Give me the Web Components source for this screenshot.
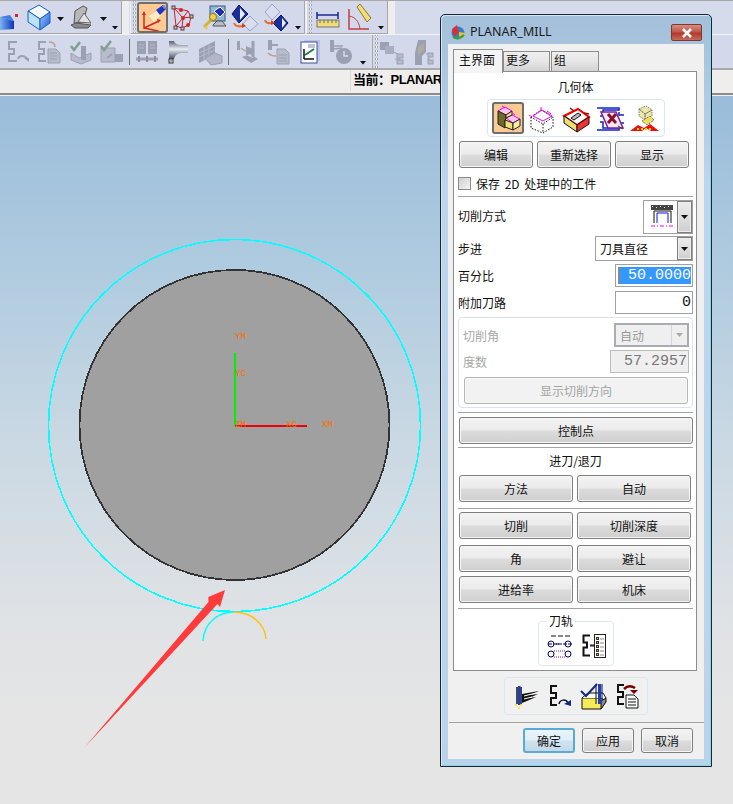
<!DOCTYPE html>
<html>
<head>
<meta charset="utf-8">
<title>PLANAR_MILL</title>
<style>
    html, body { margin: 0; height: 100%; overflow: hidden; }
    body { font: 12px "Noto Sans CJK SC", "Noto Sans", sans-serif; }
</style>
</head>
<body>
<cad-app>
    <cad-toolbar>
        <cad-group>
            <cad-icon name="cubeCut"></cad-icon>
            <cad-icon name="cube" style="margin-left:9px"></cad-icon>
            <cad-icon name="drop" style="margin-left:6px"></cad-icon>
            <cad-icon name="mould" style="margin-left:6px"></cad-icon>
            <cad-icon name="drop" style="margin-left:7px"></cad-icon>
            <cad-icon name="dropSmall" style="margin-left:5px"></cad-icon>
        </cad-group>
        <cad-group grip style="margin-left:8px">
            <cad-icon name="csys" active style="margin-left:3px"></cad-icon>
            <cad-icon name="net" style="margin-left:4px"></cad-icon>
            <cad-icon name="monitor" style="margin-left:9px"></cad-icon>
            <cad-icon name="diamondA" style="margin-left:5px"></cad-icon>
            <cad-icon name="diamondB" style="margin-left:6px"></cad-icon>
            <cad-icon name="dropSmall" style="margin-left:7px"></cad-icon>
        </cad-group>
        <cad-group grip style="margin-left:1px">
            <cad-icon name="ruler" style="margin-left:6px"></cad-icon>
            <cad-icon name="angle" style="margin-left:8px"></cad-icon>
            <cad-icon name="dropSmall" style="margin-left:7px"></cad-icon>
        </cad-group>
    </cad-toolbar>
    <cad-toolbar second>
        <cad-group plain>
            <cad-icon name="gPath" style="margin-left:7px"></cad-icon>
            <cad-icon name="gPost" style="margin-left:8px"></cad-icon>
            <cad-icon name="gCheck" style="margin-left:10px"></cad-icon>
            <cad-icon name="gCheck2" style="margin-left:8px"></cad-icon>
            <cad-icon name="vbar" style="margin-left:5px"></cad-icon>
            <cad-icon name="gBooks" style="margin-left:6px"></cad-icon>
            <cad-icon name="spindle" style="margin-left:11px"></cad-icon>
            <cad-icon name="gWall" style="margin-left:9px"></cad-icon>
            <cad-icon name="vbar" style="margin-left:6px"></cad-icon>
            <cad-icon name="gMachine" style="margin-left:7px"></cad-icon>
            <cad-icon name="gDoc" style="margin-left:7px"></cad-icon>
            <cad-icon name="report" style="margin-left:11px"></cad-icon>
            <cad-icon name="gClock" style="margin-left:9px"></cad-icon>
            <cad-icon name="dropSmall" style="margin-left:8px"></cad-icon>
        </cad-group>
        <cad-group grip second style="margin-left:4px">
            <cad-icon name="gTree" style="margin-left:4px"></cad-icon>
            <cad-icon name="gTree2" style="margin-left:7px"></cad-icon>
        </cad-group>
    </cad-toolbar>
    <cad-status>当前：PLANAR</cad-status>
    <cad-viewport></cad-viewport>

    <ug-dialog heading="PLANAR_MILL">
        <ug-tabs slot="tabs"></ug-tabs>

        <ug-label style="margin-top:6px">几何体</ug-label>
        <ug-iconbar style="margin:4px 0 0 29px;width:178px" pad="2">
            <cad-icon name="geoPart" active></cad-icon>
            <cad-icon name="geoBlank"></cad-icon>
            <cad-icon name="geoCheck"></cad-icon>
            <cad-icon name="geoTrim"></cad-icon>
            <cad-icon name="geoFloor"></cad-icon>
        </ug-iconbar>
        <ug-row cols="74px 74px 74px" style="margin:4px 0 0 1px">
            <ug-button>编辑</ug-button>
            <ug-button>重新选择</ug-button>
            <ug-button>显示</ug-button>
        </ug-row>
        <ug-check style="margin-top:9px">保存 2D 处理中的工件</ug-check>
        <ug-sep style="margin-top:6px"></ug-sep>
        <ug-field label="切削方式" width="50" height="34" style="margin-top:3px;--lift:3px"><ug-combo icon></ug-combo></ug-field>
        <ug-field label="步进" width="98" height="25" style="margin-top:2px;--lift:1px"><ug-combo>刀具直径</ug-combo></ug-field>
        <ug-field label="百分比" width="78" height="23" style="margin-top:3px"><ug-input selected>50.0000</ug-input></ug-field>
        <ug-field label="附加刀路" width="78" height="23" style="margin-top:4px"><ug-input>0</ug-input></ug-field>
        <ug-box style="margin-top:3px">
            <ug-field label="切削角" width="75" height="24" off style="margin-left:4px;margin-right:3px"><ug-combo off>自动</ug-combo></ug-field>
            <ug-field label="度数" width="79" height="23" off style="margin:3px 3px 0 4px"><ug-input off>57.2957</ug-input></ug-field>
            <ug-button off style="margin:4px 4px 0 5px;height:27px">显示切削方向</ug-button>
        </ug-box>
        <ug-sep style="margin-top:4px"></ug-sep>
        <ug-button style="margin:4px 0 0 1px;height:27px">控制点</ug-button>
        <ug-sep style="margin-top:3px"></ug-sep>
        <ug-label style="margin-top:4px">进刀/退刀</ug-label>
        <ug-row cols="114px 114px" style="margin:6px 0 0 1px">
            <ug-button>方法</ug-button>
            <ug-button>自动</ug-button>
        </ug-row>
        <ug-sep style="margin-top:6px"></ug-sep>
        <ug-row cols="114px 114px" style="margin:3px 0 0 1px">
            <ug-button>切削</ug-button>
            <ug-button>切削深度</ug-button>
        </ug-row>
        <ug-row cols="114px 114px" style="margin:6px 0 0 1px">
            <ug-button>角</ug-button>
            <ug-button>避让</ug-button>
        </ug-row>
        <ug-row cols="114px 114px" style="margin:4px 0 0 1px">
            <ug-button>进给率</ug-button>
            <ug-button>机床</ug-button>
        </ug-row>
        <ug-sep style="margin-top:5px"></ug-sep>
        <ug-iconbar legend="刀轨" style="margin:12px 0 0 80px;width:76px;height:45px;padding-top:5px" pad="10">
            <cad-icon name="axisPath"></cad-icon>
            <cad-icon name="axisList"></cad-icon>
        </ug-iconbar>

        <ug-iconbar slot="actions" style="margin:6px 0 0 51px;width:144px" pad="10">
            <cad-icon name="bFeed"></cad-icon>
            <cad-icon name="bReplay"></cad-icon>
            <cad-icon name="bVerify"></cad-icon>
            <cad-icon name="bPost"></cad-icon>
        </ug-iconbar>
        <ug-sep slot="actions" style="margin:7px -5px 0 -4px"></ug-sep>
        <ug-row slot="actions" cols="52px 52px 52px" style="margin:5px 0 0 70px;gap:7px;height:25px">
            <ug-button default>确定</ug-button>
            <ug-button>应用</ug-button>
            <ug-button>取消</ug-button>
        </ug-row>
    </ug-dialog>
</cad-app>

<script>
// icon table: [width, height, svg body]. Coordinates are screen pixels.
const bracket = (c, w) => `<path d="M${w} 1H1v7h5v5H1v7h${w - 1}" fill="none" stroke="${c}" stroke-width="2"/>`;
const G = '#9aa1b3', G2 = '#b6bccb';
const ICONS = {
    cubeCut: [18, 26, `<defs><linearGradient id="a" x1="0" x2="1"><stop offset="0" stop-color="#7fb4f2"/><stop offset="1" stop-color="#0b32b8"/></linearGradient></defs>
        <path d="M0 13l14 4v8l-14 1z" fill="url(#a)"/><path d="M0 13l10-2 4 6z" fill="#3f7fe0"/><rect x="15" y="10" width="3" height="3" fill="#e02020"/>`],
    cube: [24, 28, `<defs><linearGradient id="b" x1="0" y1="0" x2="1" y2="1"><stop offset="0" stop-color="#9fd0ff"/><stop offset="1" stop-color="#1d52d8"/></linearGradient></defs>
        <path d="M1 8L12 2l11 7-10 7z" fill="#f6fbff" stroke="#1a62c0"/><path d="M1 8l12 8v11L1 19z" fill="#bfe0fb" stroke="#1a62c0"/><path d="M13 16l10-7v11l-10 7z" fill="url(#b)" stroke="#1a62c0"/>`],
    mould: [23, 26, `<path d="M1 21l5-2 15 2-3 3H5z" fill="#8b8b8b" stroke="#555"/><path d="M4 19L5 7l8-5 4 2-4 14z" fill="#b8b8b8" stroke="#555"/><path d="M8 18l6-9 7 10z" fill="#e2e2e2" stroke="#666"/>`],
    drop: [7, 26, `<path d="M0 13h7l-3.500 4z" fill="#111"/>`],
    dropSmall: [5, 30, `<path d="M0 24h6l-3 3.500z" fill="#111"/>`],
    csys: [31, 31, `<path d="M7 11v15l15-7M7 26l14 3" fill="none" stroke="#cf2a20" stroke-width="1.500"/><path d="M5 13l2-4 2 4zM20 17l4 1-3 3zM19 28l4 1-4 2z" fill="#cf2a20"/>
        <path d="M12 14l10-6 3 4-8 8z" fill="#f6f0c8" opacity=".9"/><path d="M19 8l7-5 3 4-6 6z" fill="#1c33c8"/><path d="M25 4l3-1 1 3-2 1z" fill="#6f8df0"/>`],
    net: [22, 26, `<path d="M2 4l14 3 3 6-2 8-7 3-6-2zM2 4l9 10 8-1M11 14l-1 10M11 14L4 22M16 7l-5 7" fill="none" stroke="#c22" stroke-width="1"/>
        <g fill="#d92020"><circle cx="9" cy="6" r="2"/><circle cx="11" cy="14" r="2"/><circle cx="16" cy="21" r="2"/></g>
        <g fill="#e8d820" stroke="#503080"><rect x="0" y="2" width="3" height="3"/><rect x="18" y="11" width="3" height="3"/><rect x="2" y="22" width="3" height="3"/><rect x="9" y="23" width="3" height="3"/></g>`],
    monitor: [24, 28, `<rect x="7" y="3" width="15" height="15" fill="#8fb6d8" stroke="#3c5a78"/><path d="M10 22l4-4h5l4 5H10z" fill="#b9bec6" stroke="#555"/><path d="M11 8l6-4 5 5-5 5z" fill="#1c2fb0" stroke="#fff"/>
        <path d="M1 24l8-8" stroke="#d8b030" stroke-width="3"/><circle cx="10" cy="14" r="3.500" fill="#f0d050" stroke="#a07a10"/><path d="M1 22l2 5 2-2" fill="#e8c840"/>`],
    diamondA: [26, 28, `<path d="M7 2l9 9-9 9-7-9z" fill="#1a2f9c" stroke="#0a1550"/><path d="M8 5l5 6-5 6z" fill="#e8eeff"/><path d="M18 13l8 8-8 7-7-7z" fill="#d8def0" stroke="#9aa6c8"/><path d="M2 20c1 3 4 4 9 3" fill="none" stroke="#e0702a" stroke-width="2"/><path d="M10 20l4 3-4 2z" fill="#e03a1a"/>`],
    diamondB: [24, 28, `<path d="M8 1l8 8-8 8-7-8z" fill="#d8def0" stroke="#9aa6c8"/><path d="M17 12l7 8-7 8-8-8z" fill="#1a2f9c" stroke="#0a1550"/><path d="M18 15l4 5-4 5z" fill="#e8eeff"/><path d="M1 17c1 3 3 4 7 3" fill="none" stroke="#e0702a" stroke-width="2"/><path d="M7 17l4 3-4 2z" fill="#e03a1a"/>`],
    ruler: [23, 26, `<path d="M1 8v7M22 8v7M2 11h19" stroke="#1c2a90" stroke-width="1.500" fill="none"/><path d="M2 9l-1 2 1 2zM21 9l1 2-1 2z" fill="#1c2a90"/><rect x="1" y="16" width="22" height="7" fill="#f0dc78" stroke="#777"/><path d="M4 16v3M8 16v3M12 16v3M16 16v3M20 16v3" stroke="#666"/>`],
    angle: [24, 28, `<path d="M2 6v20h20" fill="none" stroke="#c44040" stroke-width="1.500"/><path d="M2 13c6 1 10 5 11 13" fill="none" stroke="#c44040"/><path d="M10 4l3-3 11 14-4 4z" fill="#f0dc78" stroke="#887830"/>`],
    vbar: [1, 26, `<rect width="1" height="26" fill="#6f6f78"/>`],
    gPath: [23, 24, `<g transform="translate(1,1)">${bracket(G, 9)}</g><path d="M11 19c1-4 7-4 9 0" fill="none" stroke="${G}" stroke-width="2"/><path d="M17 18h5v4z" fill="${G}"/>`],
    gPost: [22, 24, `<g transform="translate(0,1)">${bracket(G, 8)}</g><path d="M10 9h8l4 4v10H10z" fill="${G2}" stroke="${G}"/><path d="M12 13h7M12 16h7M12 19h7" stroke="${G}"/><path d="M11 2c4 0 6 2 6 5" fill="none" stroke="#b89a9a" stroke-width="1.500"/>`],
    gCheck: [22, 24, `<path d="M1 13l8 5 12-5v7l-10 4-10-4z" fill="${G2}" stroke="${G}"/><rect x="11" y="6" width="5" height="14" fill="${G}"/><path d="M1 6l3 4 6-8" fill="none" stroke="#7f9f8f" stroke-width="2.500"/>`],
    gCheck2: [24, 24, `<path d="M1 8h14v14H1z" fill="${G2}" stroke="${G}"/><path d="M15 14h8v8h-8z" fill="${G}"/><path d="M7 18l5-4" stroke="${G}" stroke-width="2"/><path d="M1 6l3 4 7-9" fill="none" stroke="#7f9f8f" stroke-width="2.500"/>`],
    gBooks: [22, 26, `<path d="M1 2h9v13H1zM12 2h9v13h-9z" fill="${G}"/><path d="M3 6h5M3 9h5M14 6h5M14 9h5" stroke="${G2}"/><path d="M0 20h22" stroke="${G}" stroke-width="3"/><path d="M3 17v6M11 17v6M19 17v6" stroke="#9a8aa0" stroke-width="2"/>`],
    spindle: [20, 28, `<defs><linearGradient id="s" x2="0" y2="1"><stop offset="0" stop-color="#5a6270"/><stop offset=".45" stop-color="#e8eef2"/><stop offset="1" stop-color="#4a5060"/></linearGradient></defs>
        <path d="M0 3h5c1 3 4 4 8 4h6v8h-6c-4 0-7 2-8 6H0z" fill="url(#s)"/><rect x="0" y="21" width="4" height="4" fill="#ddd" stroke="#333"/><rect x="1.500" y="22.500" width="1" height="1" fill="#222"/>`],
    gWall: [24, 26, `<path d="M1 10l16-8v14L1 24z" fill="${G}"/><path d="M1 14l16-7M1 18l16-7M6 8v14M11 6v13" stroke="${G2}"/><path d="M7 19l10-5 7 3v7l-11 2z" fill="#b3b6c8" stroke="${G}"/>`],
    gMachine: [23, 26, `<path d="M1 2h3v9H1z" fill="${G}"/><path d="M5 9c3 3 4 3 6 3" stroke="#b8a8a0" stroke-width="1.500" fill="none"/><path d="M10 7l7 3v9l-7-3zM6 18l9 6 7-4-8-5z" fill="${G}"/><path d="M17 2v16" stroke="${G}" stroke-width="3"/>`],
    gDoc: [23, 26, `<rect x="2" y="1" width="4" height="10" fill="${G}"/><path d="M6 6h6" stroke="${G}" stroke-width="2"/><path d="M2 14c3 3 5 3 8 3" stroke="#b8a090" stroke-width="1.500" fill="none"/><path d="M11 10h8l4 4v11H11z" fill="${G2}" stroke="${G}"/><path d="M13 16h8M13 19h8M13 22h8" stroke="${G}"/>`],
    report: [20, 24, `<rect x="4" y="0" width="16" height="21" fill="#b8c4ea"/><rect x="1" y="2" width="16" height="21" fill="#fff" stroke="#3a4fa0"/><path d="M4 9v10M4 19h10" stroke="#111" stroke-width="1.500"/><path d="M5 15l9-6" stroke="#1f7a4a" stroke-width="2"/><path d="M8 5h7M8 7h7" stroke="#7a86b0"/>`],
    gClock: [23, 26, `<rect x="1" y="1" width="4" height="12" fill="${G}"/><path d="M5 7h9M5 10l8-1" stroke="${G}" stroke-width="1.500"/><circle cx="15" cy="17" r="8" fill="${G}"/><path d="M15 12v5h4" stroke="#d5dbea" stroke-width="1.500" fill="none"/>`],
    gTree: [23, 26, `<rect x="0" y="3" width="9" height="8" fill="${G}"/><rect x="5" y="7" width="9" height="8" fill="#a8aebf"/><path d="M14 13l5 3v8M15 20h4" stroke="${G}" fill="none"/><rect x="17" y="15" width="6" height="4" fill="${G2}" stroke="${G}"/><rect x="17" y="21" width="6" height="4" fill="${G2}" stroke="${G}"/>`],
    gTree2: [23, 28, `<path d="M8 2h8v12l-4 4v9H5V15z" fill="${G}"/><path d="M8 9l6-4v7l-6 5z" fill="#b5a99a"/><path d="M16 16h3v10M17 21h2" stroke="${G}" fill="none"/><rect x="18" y="15" width="5" height="4" fill="${G2}" stroke="${G}"/><rect x="18" y="22" width="5" height="4" fill="${G2}" stroke="${G}"/>`],

    geoPart: [32, 32, `<path d="M6 9l7-4 7 4-6 4z" fill="#ffc8f0" stroke="#f0f"/><path d="M14 16l6-3 8 4-7 4z" fill="#ffc8f0" stroke="#f0f"/><path d="M6 9l8 4v4l-1 1v8l-7-4z" fill="#6e6a28" stroke="#222"/><path d="M14 13l6-4v4l-6 3z" fill="#f4e48a" stroke="#222"/><path d="M13 18l8 3v7l-8-3z" fill="#f0e070" stroke="#222"/><path d="M21 21l7-4v7l-7 4z" fill="#f8eca8" stroke="#222"/><path d="M10 4l3 2M20 11l3 2" stroke="#f0f"/>`],
    geoBlank: [32, 32, `<path d="M5 15l10-7 12 7-10 7zM5 15v11l12 5 10-6V15M17 22v9" fill="none" stroke="#111" stroke-dasharray="1.500 1.500"/><path d="M7 14l9-6 10 6-9 5z" fill="none" stroke="#e0e"/><path d="M15 5v4M3 13l3 2M21 9l4 3" stroke="#e0e"/>`],
    geoCheck: [32, 32, `<path d="M4 14l14-7 11 8-12 8z" fill="#fff" stroke="#e00" stroke-width="2"/><path d="M4 14v7l13 9v-7z" fill="#e8e070" stroke="#111"/><path d="M17 23l12-8v7l-12 8z" fill="#e33" stroke="#111"/><path d="M11 16l7-5 3 2-7 5z" fill="#bbb" stroke="#111"/><path d="M10 6l4 3M24 11l5 1" stroke="#a00" stroke-width="1.500"/>`],
    geoTrim: [32, 32, `<path d="M3 6h22v2H9v6H6M3 28h22v-2H9v-6H6M30 13h-5v-3M30 21h-5v3" fill="none" stroke="#12c" stroke-width="1.500"/><path d="M7 10h15l7 16H14z" fill="#f1e8f1" stroke="#80208a" stroke-width="1.500"/><path d="M14 12l8 9M22 12l-8 9" stroke="#8a1030" stroke-width="3"/><path d="M24 24l5 3" stroke="#333"/>`],
    geoFloor: [32, 32, `<path d="M11 7l7-3 6 4-7 4zM11 7v7l6 4v-6zM17 12l7-4v6l-7 4z" fill="#eee8a8" stroke="#777" stroke-dasharray="1.500 1"/><path d="M14 19l8-5 4 4-7 5z" fill="#eede58" stroke="#555" stroke-dasharray="1 1"/><path d="M2 29l8-6 6 3 6-4 9 7h-8l-5-3-4 3z" fill="#e81010"/><path d="M9 27h16" stroke="#ffd000" stroke-width="2" stroke-dasharray="2 2"/>`],

    axisPath: [25, 25, `<path d="M4 2h5M11 2h5M18 2h5" stroke="#111"/><circle cx="4" cy="10" r="3" fill="none" stroke="#006"/><circle cx="21" cy="10" r="3" fill="none" stroke="#006"/><path d="M1 10h24M9 10h3" stroke="#006" stroke-dasharray="4 1"/><circle cx="4" cy="20" r="3" fill="none" stroke="#006"/><circle cx="21" cy="20" r="3" fill="none" stroke="#006"/><path d="M7 17h11M7 23h11" stroke="#80209a" stroke-dasharray="1 1"/>`],
    axisList: [24, 25, `<path d="M8 1.500H1.500v7H5v5H1.500v8H8M8 11.500h5" fill="none" stroke="#111" stroke-width="2"/><path d="M8 11.500h4" stroke="#1c30b0"/><rect x="12.500" y="0.500" width="11" height="23" fill="#fff" stroke="#222"/><g fill="#d8c820" stroke="#333"><rect x="14.500" y="3.500" width="2" height="2"/><rect x="14.500" y="7.500" width="2" height="2"/><rect x="14.500" y="11.500" width="2" height="2"/><rect x="14.500" y="15.500" width="2" height="2"/><rect x="14.500" y="19.500" width="2" height="2"/></g><path d="M18 5h4M18 9h4M18 13h4M18 17h4M18 21h4" stroke="#888"/>`],
    bFeed: [24, 24, `<path d="M2 3v17M6 3v17" stroke="#111" stroke-width="1.500"/><rect x="3" y="2" width="2.500" height="19" fill="#1c3cc8"/><path d="M7 10l17-3-9 4 8-1-9 4 7-1-9 4-5 2z" fill="#111"/><path d="M9 12l12-3M9 15l8-2" stroke="#fff"/><path d="M0 21h2M5 21h2M3 24h2" stroke="#ffe000" stroke-width="1.500"/>`],
    bReplay: [22, 24, `<g transform="translate(1,1)">${bracket('#111', 7)}</g><path d="M10 20c1-5 7-5 9-1" fill="none" stroke="#113" stroke-width="1.500"/><path d="M15 20l7-4v6z" fill="#112a80"/>`],
    bVerify: [25, 25, `<path d="M1 14h6l13 0 5 3-5 8H1z" fill="#f4ea5a" stroke="#111"/><path d="M20 25v-8l5-3v4z" fill="#888" stroke="#111"/><path d="M1 14l6-5h15l3 5" fill="#fff" stroke="#111"/><path d="M15 0v20M21 0v16" stroke="#111" stroke-width="1"/><rect x="17" y="0" width="3" height="20" fill="#1c3cc8"/><path d="M0 7l5 5 11-12" fill="none" stroke="#112a80" stroke-width="2"/>`],
    bPost: [22, 24, `<g transform="translate(1,0)">${bracket('#111', 7)}</g><path d="M8 5c4-4 8-3 11-1" fill="none" stroke="#700" stroke-width="2.500"/><path d="M14 6h8l-4 4z" fill="#700"/><path d="M10 11h8l4 4v9H10z" fill="#fff" stroke="#111"/><path d="M12 15h8M12 18h8M12 21h8" stroke="#111"/>`],
    cutMode: [24, 24, `<rect x="1" y="0" width="22" height="5" fill="#444"/><g fill="#ddd"><rect x="2" y="1" width="1" height="1"/><rect x="6" y="2" width="1" height="1"/><rect x="10" y="1" width="1" height="1"/><rect x="14" y="2" width="1" height="1"/><rect x="18" y="1" width="1" height="1"/></g>
        <path d="M4 18V6h17v12" fill="none" stroke="#111"/><path d="M7 18V8h11v10" fill="none" stroke="#1010e8"/><path d="M1 21h23" stroke="#f0f" stroke-dasharray="4 2 1 2"/>`]
};

class CadIcon extends HTMLElement {
    constructor() {
        super();
        this.attachShadow({ mode: 'open' });
    }
    connectedCallback() {
        const [w, h, body] = ICONS[this.getAttribute('name')];
        this.shadowRoot.innerHTML = `
            <style>
                :host { display: inline-flex; flex: none; line-height: 0; }
                :host([active]) { outline: 2px solid #6e6e6e; outline-offset: -2px; border-radius: 3px; background: #fdca94; }
            </style>
            <svg width="${w}" height="${h}" viewBox="0 0 ${w} ${h}" style="overflow:visible">${body}</svg>`;
    }
}
customElements.define('cad-icon', CadIcon);

class CadApp extends HTMLElement {
    constructor() {
        super();
        this.attachShadow({ mode: 'open' }).innerHTML = `
            <style>
                :host { display: flex; flex-direction: column; position: relative; width: 733px; height: 804px; overflow: hidden; background: #f0f0f0; }
            </style>
            <slot></slot>`;
    }
}
customElements.define('cad-app', CadApp);

class CadToolbar extends HTMLElement {
    constructor() {
        super();
        this.attachShadow({ mode: 'open' }).innerHTML = `
            <style>
                :host { display: flex; flex: none; height: 34px; background: #d5dbea; border-top: 1px solid #a8a8a8; box-sizing: border-box; }
                :host([second]) { height: 36px; background: #d5dbea; border-top: 1px solid #f4f4f4; border-bottom: 2px solid #a9a9a9; }
            </style>
            <slot></slot>`;
    }
}
customElements.define('cad-toolbar', CadToolbar);

class CadGroup extends HTMLElement {
    constructor() {
        super();
        this.attachShadow({ mode: 'open' }).innerHTML = `
            <style>
                :host { display: flex; align-items: center; flex: none; height: 100%; background: #d3d9ea; padding-right: 4px; border-right: 1px solid #a6a6a6; border-bottom: 1px solid #a6a6a6; box-sizing: border-box; box-shadow: 7px 0 0 0 #eeeeee; position: relative; }
                :host([grip]) { border-left: 1px solid #f2f2f2; padding-left: 3px; background-image: radial-gradient(circle, #fff 1px, #8f96a8 1px, transparent 1.600px); background-size: 3px 4px; background-position: 2px 2px; background-repeat: repeat-y; }
                :host([plain]) { border-right: 0; border-bottom: 0; box-shadow: none; padding-right: 0; width: 369px; }
                :host([second]) { border: 0; box-shadow: -1px 0 0 #a9a9a9; flex: 1; }
            </style>
            <slot></slot>`;
    }
}
customElements.define('cad-group', CadGroup);

class CadStatus extends HTMLElement {
    constructor() {
        super();
        this.attachShadow({ mode: 'open' }).innerHTML = `
            <style>
                :host { display: flex; flex: none; height: 23px; background: #f0eeec; border-bottom: 2px solid #8c8c8c; box-shadow: 0 1px 0 #eee; }
                div { margin-left: 350px; padding-left: 2px; border-left: 1px solid #dcdad8; height: 21px; font: bold 13px/19px "Liberation Sans", "Noto Sans CJK SC", sans-serif; letter-spacing: -.5px; color: #000; white-space: nowrap; }
            </style>
            <div><slot></slot></div>`;
    }
}
customElements.define('cad-status', CadStatus);

class CadViewport extends HTMLElement {
    constructor() {
        super();
        this.attachShadow({ mode: 'open' }).innerHTML = `
            <style>
                :host { display: block; flex: 1; margin-top: 1px; position: relative; background: linear-gradient(#9abcda 0, #afcbdf 170px, #c9d8e3 340px, #dfe2e5 520px, #e5e5e5 620px); }
                svg { position: absolute; left: 0; top: -95px; }
                text { font: 9px "Liberation Mono", monospace; fill: #ff6a00; }
                circle { shape-rendering: crispEdges; }
            </style>
            <svg width="733" height="804" viewBox="0 0 733 804">
                <circle cx="234.500" cy="424.500" r="186" fill="none" stroke="#00ffff" stroke-width="1.600"/>
                <circle cx="234.500" cy="424" r="155" fill="#a0a0a0" stroke="#333" stroke-width="1.800"/>
                <rect x="234" y="352" width="2" height="73" fill="#00f000"/>
                <rect x="235" y="424" width="72" height="2" fill="#f00000"/>
                <text x="235" y="338">YM</text>
                <text x="235" y="375">YC</text>
                <text x="235" y="426">ZM</text>
                <text x="286" y="426">XC</text>
                <text x="322" y="426">XM</text>
                <path d="M203 640C204 622 218 611 234 611" fill="none" stroke="#00ffff" stroke-width="1.500"/>
                <path d="M234 611C250 611 265 622 266 638" fill="none" stroke="#ffc000" stroke-width="1.500"/>
                <polygon points="84.300,746.700 208.500,601 208.300,596 225,589 220,606 217.500,603" fill="#ff3b3b"/>
            </svg>`;
    }
}
customElements.define('cad-viewport', CadViewport);

class UgDialog extends HTMLElement {
    constructor() {
        super();
        this.attachShadow({ mode: 'open' }).innerHTML = `
            <style>
                :host { position: absolute; left: 440px; top: 14px; width: 272px; height: 753px; box-sizing: border-box; padding: 29px 7px 7px; border: 1px solid #1c2630; border-radius: 5px 5px 0 0; background: linear-gradient(#a4bfda, #bcd6ee 170px, #b9d3eb); box-shadow: inset 1px 1px 0 #d8e6f2, inset -1px -1px 0 #7fd8f0; font: 12px "Noto Sans CJK SC", sans-serif; color: #111; }
                #title { position: absolute; left: 29px; top: 9px; font: 12.500px/16px "Noto Sans", "Liberation Sans", sans-serif; color: #1a1a1a; }
                #logo { position: absolute; left: 9px; top: 9px; }
                #close { position: absolute; right: 9px; top: 9px; width: 31px; height: 17px; box-sizing: border-box; border: 1px solid #7a3a30; border-radius: 2px; background: linear-gradient(#d98a7e, #c0584c 45%, #b2392c 55%, #c96a58); display: flex; align-items: center; justify-content: center; }
                #client { height: 100%; box-sizing: border-box; padding: 5px; background: #f0f0f0; display: flex; flex-direction: column; }
                #panel { height: 600px; box-sizing: border-box; background: #fff; border: 1px solid #8d8d8d; padding: 0 3px 0 4px; margin-top: -1px; width: 244px; display: flex; flex-direction: column; flex: none; }
                #actions { display: flex; flex-direction: column; margin-top: 0; }
                ::slotted(*) { flex: none; }
            </style>
            <svg id="logo" width="16" height="16" viewBox="0 0 16 16">
                <circle cx="8" cy="9" r="6.500" fill="#2f7fd0"/><path d="M2 5l5-4 2 7-5 5z" fill="#d83030"/><path d="M9 8l6 1c0 3-3 6-6 6z" fill="#f0c020"/><path d="M3 13c4 2 8 1 11-2" fill="none" stroke="#30a040" stroke-width="2"/>
            </svg>
            <div id="title"></div>
            <div id="close"><svg width="12" height="10" viewBox="0 0 12 10"><path d="M2 1l8 8M10 1l-8 8" stroke="#fff" stroke-width="2.500"/></svg></div>
            <div id="client">
                <slot name="tabs"></slot>
                <div id="panel"><slot></slot></div>
                <div id="actions"><slot name="actions"></slot></div>
            </div>`;
    }
    connectedCallback() {
        this.shadowRoot.querySelector('#title').textContent = this.getAttribute('heading');
    }
}
customElements.define('ug-dialog', UgDialog);

class UgTabs extends HTMLElement {
    constructor() {
        super();
        this.attachShadow({ mode: 'open' }).innerHTML = `
            <style>
                :host { display: flex; align-items: flex-end; height: 23px; flex: none; position: relative; z-index: 1; }
                div { box-sizing: border-box; height: 20px; border: 1px solid #8d8d8d; border-bottom: 0; background: linear-gradient(#efefef, #e6e6e6 50%, #d2d2d2); line-height: 16px; padding-left: 2px; margin-left: -1px; margin-bottom: 1px; }
                .on { height: 24px; width: 50px; background: #f4f4f4; margin: 0 0 -1px; padding-left: 5px; line-height: 20px; }
                .b { width: 47px; margin-left: 0; }
                .c { width: 48px; margin-left: 1px; }
            </style>
            <div class="on">主界面</div><div class="b">更多</div><div class="c">组</div>`;
    }
}
customElements.define('ug-tabs', UgTabs);

class UgLabel extends HTMLElement {
    constructor() {
        super();
        this.attachShadow({ mode: 'open' }).innerHTML = `
            <style>:host { display: block; height: 17px; line-height: 17px; text-align: center; }</style>
            <slot></slot>`;
    }
}
customElements.define('ug-label', UgLabel);

class UgIconbar extends HTMLElement {
    constructor() {
        super();
        const legend = this.getAttribute('legend');
        const gap = this.getAttribute('pad') || 4;
        this.attachShadow({ mode: 'open' }).innerHTML = `
            <style>
                :host { display: flex; align-items: center; justify-content: center; gap: ${gap}px; height: 38px; box-sizing: border-box; border: 1px solid #dbe5ef; border-radius: 4px; position: relative; }
                span { position: absolute; left: 8px; top: -9px; padding: 0 2px; background: #fff; line-height: 16px; }
            </style>
            ${legend ? `<span>${legend}</span>` : ''}<slot></slot>`;
    }
}
customElements.define('ug-iconbar', UgIconbar);

class UgRow extends HTMLElement {
    constructor() {
        super();
        this.attachShadow({ mode: 'open' }).innerHTML = `
            <style>:host { display: grid; grid-template-columns: ${this.getAttribute('cols')}; gap: 4px; height: 27px; }</style>
            <slot></slot>`;
    }
}
customElements.define('ug-row', UgRow);

class UgButton extends HTMLElement {
    constructor() {
        super();
        this.attachShadow({ mode: 'open' }).innerHTML = `
            <style>
                :host { display: flex; align-items: center; justify-content: center; box-sizing: border-box; height: 100%; border: 1px solid #7e7e7e; border-radius: 3px; background: linear-gradient(#f3f3f3, #ebebeb 48%, #dcdcdc 52%, #cfcfcf); box-shadow: inset 0 0 0 1px #f7f7f7; color: #111; }
                :host([off]) { background: #f2f2f2; border-color: #b5b5b5; color: #a4a4a4; }
                :host([default]) { border: 2px solid #5aaad8; box-shadow: none; background: linear-gradient(#eaf4fa, #dfeef8 48%, #cfe3f0 52%, #c4d8e6); }
            </style>
            <slot></slot>`;
    }
}
customElements.define('ug-button', UgButton);

class UgCheck extends HTMLElement {
    constructor() {
        super();
        this.attachShadow({ mode: 'open' }).innerHTML = `
            <style>
                :host { display: flex; align-items: center; gap: 5px; height: 13px; line-height: 11px; word-spacing: 2px; }
                i { width: 11px; height: 11px; border: 1px solid #8a8a8a; background: linear-gradient(135deg, #d0d0d0, #f4f4f4); }
            </style>
            <i></i><slot></slot>`;
    }
}
customElements.define('ug-check', UgCheck);

class UgSep extends HTMLElement {
    constructor() {
        super();
        this.attachShadow({ mode: 'open' }).innerHTML = `
            <style>:host { display: block; height: 1px; background: #a3a3a3; }</style>`;
    }
}
customElements.define('ug-sep', UgSep);

class UgField extends HTMLElement {
    constructor() {
        super();
        const w = this.getAttribute('width'), h = this.getAttribute('height');
        this.attachShadow({ mode: 'open' }).innerHTML = `
            <style>
                :host { display: flex; align-items: center; justify-content: space-between; height: ${h}px; }
                :host([off]) { color: #a8a8a8; }
                span { margin-bottom: var(--lift, 0); }
                div { width: ${w}px; height: ${h}px; }
            </style>
            <span>${this.getAttribute('label')}</span><div><slot></slot></div>`;
    }
}
customElements.define('ug-field', UgField);

class UgCombo extends HTMLElement {
    constructor() {
        super();
        this.attachShadow({ mode: 'open' }).innerHTML = `
            <style>
                :host { display: flex; box-sizing: border-box; height: 100%; border: 1px solid #a0a0a0; background: #fff; }
                :host([off]) { border: 2px solid #a9adb3; background: #efefef; color: #999; }
                #v { flex: 1; padding-left: 4px; display: flex; align-items: center; }
                :host([icon]) #v { justify-content: center; padding-left: 3px; }
                #b { width: 15px; flex: none; border: 1px solid #7f7f7f; box-shadow: inset 0 0 0 1px #eee; background: linear-gradient(#ececec, #cfcfcf); display: flex; align-items: center; justify-content: center; box-sizing: border-box; }
                :host([off]) #b { border: 0; border-left: 1px solid #cfd6df; box-shadow: none; background: #efefef; width: 16px; }
                :host([off]) path { fill: #aaa; }
            </style>
            <div id="v">${this.hasAttribute('icon') ? '<cad-icon name="cutMode"></cad-icon>' : '<slot></slot>'}</div>
            <div id="b"><svg width="7" height="4"><path d="M0 0h7L3.500 4z" fill="#111"/></svg></div>`;
    }
}
customElements.define('ug-combo', UgCombo);

class UgInput extends HTMLElement {
    constructor() {
        super();
        this.attachShadow({ mode: 'open' }).innerHTML = `
            <style>
                :host { display: flex; justify-content: flex-end; align-items: center; box-sizing: border-box; height: 100%; border: 1px solid #a0a0a0; padding: 0 1px; background: #fff; font: 15px "Liberation Mono", monospace; color: #111; }
                :host([off]) { background: #efefef; border-color: #bdbdbd; color: #777; }
                :host([selected]) { padding: 2px 1px 2px 2px; }
                span { flex: 1; text-align: right; display: block; }
                :host([selected]) span { background: #3399ff; color: #fff; border-left: 1px solid #e07a1c; line-height: 17px; }
            </style>
            <span><slot></slot></span>`;
    }
}
customElements.define('ug-input', UgInput);

class UgBox extends HTMLElement {
    constructor() {
        super();
        this.attachShadow({ mode: 'open' }).innerHTML = `
            <style>:host { display: flex; flex-direction: column; box-sizing: border-box; height: 91px; padding-top: 5px; border: 1px solid #dbe3ec; border-radius: 4px; }</style>
            <slot></slot>`;
    }
}
customElements.define('ug-box', UgBox);
</script>
</body>
</html>
